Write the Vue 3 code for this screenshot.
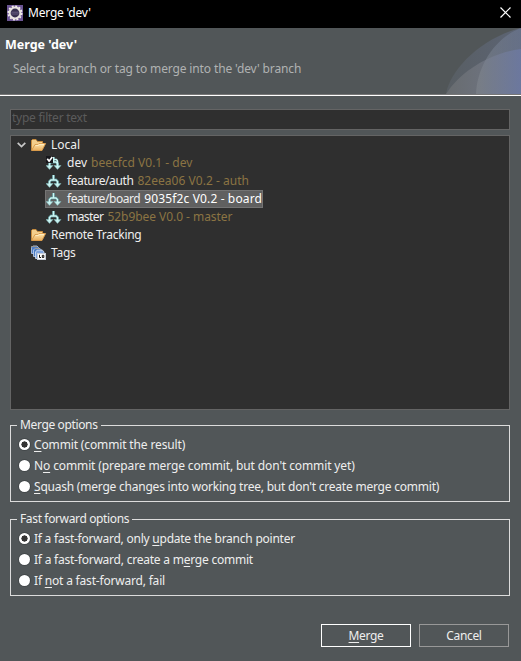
<script setup>
import { ref } from 'vue'

const branches = [
  { name: 'dev', detail: 'beecfcd V0.1 - dev', current: true, nameTrack: 0, track: 0 },
  { name: 'feature/auth', detail: '82eea06 V0.2 - auth', nameTrack: -0.4, track: 0.03 },
  { name: 'feature/board', detail: '9035f2c V0.2 - board', nameTrack: -0.42, track: 0.13 },
  { name: 'master', detail: '52b9bee V0.0 - master', nameTrack: -0.55, track: -0.05 },
]
const selected = ref('feature/board')

// Each label is [before, mnemonic letter, after]; track is its letter spacing in px.
const groups = ref([
  {
    title: 'Merge options',
    picked: 0,
    options: [
      { text: ['', 'C', 'ommit (commit the result)'], track: -0.14 },
      { text: ['N', 'o', " commit (prepare merge commit, but don't commit yet)"], track: -0.12 },
      {
        text: ['', 'S', "quash (merge changes into working tree, but don't create merge commit)"],
        track: -0.22,
      },
    ],
  },
  {
    title: 'Fast forward options',
    picked: 0,
    options: [
      { text: ['If a fast-forward, only ', 'u', 'pdate the branch pointer'], track: -0.235 },
      { text: ['If a fast-forward, create a m', 'e', 'rge commit'], track: -0.225 },
      { text: ['If ', 'n', 'ot a fast-forward, fail'], track: -0.19 },
    ],
  },
])
const spacing = (px) => ({ letterSpacing: px + 'px' })
</script>

<template>
  <div class="dialog">
    <svg width="0" height="0" class="defs">
      <defs>
        <linearGradient id="folderFill" x1="0" y1="0" x2="0" y2="1">
          <stop offset="0" stop-color="#fde9b4" />
          <stop offset="1" stop-color="#e9ae5c" />
        </linearGradient>
        <symbol id="folder" viewBox="0 0 16 16">
          <path d="M.5 13V3.5L1.5 2.5H5L6.5 4.5H11.5V7" fill="#f3cf8d" stroke="#c68b3d" />
          <path d="M.5 13.5L4 7.5H7L8 6.5H14.6L11 13.5Z" fill="url(#folderFill)" stroke="#d99b4b" />
          <path d="M4.6 8.4H7.5L8.4 7.4H13" fill="none" stroke="#fff2cc" stroke-width=".9" />
        </symbol>
        <symbol id="branch" viewBox="0 0 16 16">
          <path d="M7.5 2V7M3.5 12V8.5L5 7H10L11.5 8.5V12" fill="none" stroke="#4f8084" stroke-width="3" />
          <path d="M0 10.5H7L3.5 14.4ZM8 10.5H15L11.5 14.4Z" fill="#c4f0ee" stroke="#7fb6b8" stroke-width=".5" />
          <path d="M7.5 2V7M3.5 12V8.5L5 7H10L11.5 8.5V12" fill="none" stroke="#cdf7f5" stroke-width="1.5" />
        </symbol>
      </defs>
    </svg>

    <div class="titlebar">
      <svg class="app-icon" width="16" height="16" viewBox="0 0 16 16">
        <rect width="16" height="16" fill="#6b5593" />
        <circle cx="8" cy="8" r="6.7" fill="none" stroke="#f4f0e9" stroke-width="1.7" stroke-dasharray="2 1.508" />
        <circle cx="8" cy="8" r="5.4" fill="#37304f" stroke="#e9e5e2" stroke-width="2" />
        <path d="M4.3 7.2H11.7M4.3 9H11.7" stroke="#75698f" stroke-width=".8" />
      </svg>
      <span class="window-title">Merge 'dev'</span>
      <svg class="close" width="11" height="11" viewBox="0 0 11 11">
        <path d="M.5 .5L10.5 10.5M10.5 .5L.5 10.5" stroke="#fff" stroke-width="1.2" />
      </svg>
    </div>

    <header class="banner">
      <div class="banner-text">
        <h1>Merge 'dev'</h1>
        <p>Select a branch or tag to merge into the 'dev' branch</p>
      </div>
      <svg width="76" height="66" viewBox="0 0 76 66">
        <defs>
          <linearGradient id="back" x1="0" x2="1">
            <stop offset="0" stop-color="#585e63" />
            <stop offset="1" stop-color="#5c6474" />
          </linearGradient>
          <linearGradient id="low" x1="0" x2="1">
            <stop offset="0" stop-color="#686c6f" />
            <stop offset=".45" stop-color="#6c717b" />
            <stop offset="1" stop-color="#66719a" />
          </linearGradient>
          <linearGradient id="front" x1="0" x2="1">
            <stop offset="0" stop-color="#848a90" stop-opacity=".5" />
            <stop offset="1" stop-color="#7482a4" stop-opacity=".4" />
          </linearGradient>
        </defs>
        <path d="M1 66C5 42 36 10 76 0V66Z" fill="url(#back)" />
        <path d="M1 66C15 44 44 25 76 21V66Z" fill="url(#low)" />
        <path d="M31 66C32 39 49 10 76 0V66Z" fill="url(#front)" />
      </svg>
    </header>

    <main>
      <input class="filter" placeholder="type filter text" />

      <div class="tree">
        <div class="row root">
          <svg class="twisty" width="9" height="6" viewBox="0 0 9 6">
            <path d="M.7 .8L4.5 4.6L8.3 .8" fill="none" stroke="#c8c8c8" stroke-width="1.7" />
          </svg>
          <svg class="icon" width="16" height="16"><use href="#folder" /></svg>
          <span>Local</span>
        </div>
        <div v-for="b in branches" :key="b.name" class="row leaf" @click="selected = b.name">
          <div class="item" :class="{ selected: selected === b.name }">
            <svg class="icon" width="16" height="16" viewBox="0 0 16 16">
              <use href="#branch" />
              <g v-if="b.current">
                <path d="M8 4.5H10.5L11.5 6V10" fill="none" stroke="#cdf7f5" stroke-width="1.5" />
                <rect x="0" y="1" width="7" height="7" fill="#17171b" />
                <path d="M1.3 3.8L3.1 6.2L6.3 2" fill="none" stroke="#fff" stroke-width="1.7" />
              </g>
            </svg>
            <span class="name" :style="spacing(b.nameTrack)">{{ b.name }}</span>
            <span class="detail" :style="spacing(b.track)">{{ b.detail }}</span>
          </div>
        </div>
        <div class="row group">
          <svg class="icon" width="16" height="16"><use href="#folder" /></svg>
          <span>Remote Tracking</span>
        </div>
        <div class="row group">
          <svg class="icon" width="16" height="16" viewBox="0 0 16 16">
            <path d="M.5 2.5L2 1H6L7.5 2.5V8.5H.5Z" fill="#4c7cc4" stroke="#b9cdec" stroke-width=".8" />
            <path d="M2.5 5L4 3.5H9L10.5 5V11.5H2.5Z" fill="#4c7cc4" stroke="#c8d8f1" stroke-width=".8" />
            <path d="M4.5 7L6 5.2H11.5L13 7V13.5H4.5Z" fill="#7ea3dd" stroke="#dbe7f8" stroke-width=".8" />
            <path d="M0 1.6H5.5M4 3.4H8.5" stroke="#9b958d" stroke-width="1" />
            <rect x="6.5" y="8.5" width="8" height="6" fill="#fff" stroke="#c7ced9" />
            <path d="M8.5 9.8V12.5H10M11.3 10.3H12.8V12.5H11.3Z" fill="none" stroke="#111" stroke-width="1" />
          </svg>
          <span>Tags</span>
        </div>
      </div>

      <fieldset v-for="g in groups" :key="g.title">
        <legend>{{ g.title }}</legend>
        <label v-for="(o, i) in g.options" :key="i" @click="g.picked = i">
          <span class="radio" :class="{ on: g.picked === i }"></span>
          <span :style="spacing(o.track)">{{ o.text[0] }}<u>{{ o.text[1] }}</u>{{ o.text[2] }}</span>
        </label>
      </fieldset>
    </main>

    <footer>
      <button class="primary"><span><u>M</u>erge</span></button>
      <button><span>Cancel</span></button>
    </footer>
  </div>
</template>

<style>
body {
  background: #515658;
}
</style>

<style scoped>
.dialog {
  box-sizing: border-box;
  width: 521px;
  height: 661px;
  display: flex;
  flex-direction: column;
  overflow: hidden;
  background: #515658;
  color: #eee;
  font: 12px/18px "Noto Sans", "Open Sans", sans-serif;
}
.defs {
  position: absolute;
}
.titlebar {
  display: flex;
  align-items: center;
  height: 28px;
  flex: none;
  box-sizing: border-box;
  padding: 0 10px 3px 7px;
  background: #000;
  color: #fff;
}
.window-title {
  margin-left: 5px;
  flex: 1;
  letter-spacing: -0.2px;
}
.banner {
  display: flex;
  justify-content: space-between;
  height: 66px;
  flex: none;
  border-bottom: 1px solid #fff;
  box-shadow: inset 0 -1px #777;
  padding-bottom: 1px;
}
.banner-text {
  padding: 8px 0 0 5px;
}
h1 {
  margin: 0;
  font-size: 12.5px;
  line-height: 18px;
  font-weight: 700;
  color: #fff;
}
p {
  margin: 6px 0 0 8px;
  color: #b0b2b2;
  letter-spacing: -0.13px;
}
main {
  display: flex;
  flex-direction: column;
  padding: 13px 11px 0 10px;
}
.filter {
  height: 21px;
  box-sizing: border-box;
  padding: 0 1px 4px;
  border: 1px solid #646464;
  background: #2f2f2f;
  color: #eee;
  font: inherit;
  letter-spacing: -0.25px;
  outline: none;
}
.filter::placeholder {
  color: #5b5b5b;
  opacity: 1;
}
.tree {
  height: 275px;
  box-sizing: border-box;
  margin-top: 5px;
  border: 1px solid #646464;
  background: #2f2f2f;
}
.row {
  display: flex;
  align-items: center;
  height: 18px;
}
.root {
  padding-left: 6px;
}
.twisty {
  margin-right: 5px;
}
.icon {
  flex: none;
  margin-right: 4px;
}
.group {
  padding-left: 20px;
}
.group span {
  letter-spacing: -0.27px;
}
.leaf {
  padding-left: 34px;
}
.leaf .icon {
  margin-right: 5px;
}
.item {
  display: flex;
  align-items: center;
  height: 18px;
  box-sizing: border-box;
  padding: 0 1px;
}
.name {
  margin-right: 4px;
}
.detail {
  color: #8b7443;
}
.selected {
  background: #606060;
  box-shadow: inset 0 0 0 1px #747474;
}
.selected .detail {
  color: #fff;
}
fieldset {
  box-sizing: border-box;
  height: 86px;
  min-width: 0;
  margin: 6px 0 0;
  padding: 0 0 0 8px;
  border: 1px solid #dcdcdc;
}
fieldset + fieldset {
  margin-top: 8px;
}
legend {
  margin-left: -2px;
  padding: 0 3px;
  letter-spacing: -0.36px;
}
label {
  display: flex;
  align-items: center;
  height: 21px;
}
.radio {
  box-sizing: border-box;
  width: 11px;
  height: 11px;
  margin-right: 4px;
  border-radius: 50%;
  background: #fff;
  box-shadow: 0 0 0 1px #43484a;
}
.radio.on {
  background: radial-gradient(circle, #333 2.9px, #fff 3.3px);
}
u {
  text-decoration: underline;
  text-decoration-thickness: 1px;
  text-underline-offset: 2px;
  text-decoration-skip-ink: none;
}
footer {
  display: flex;
  justify-content: flex-end;
  gap: 8px;
  padding: 28px 12px 0 0;
}
button {
  box-sizing: border-box;
  width: 90px;
  height: 23px;
  padding: 0;
  border: 1px solid #989898;
  background: transparent;
  color: #eee;
  font: inherit;
  letter-spacing: -0.35px;
  line-height: 20px;
}
.primary {
  border-color: #fff;
}
</style>
